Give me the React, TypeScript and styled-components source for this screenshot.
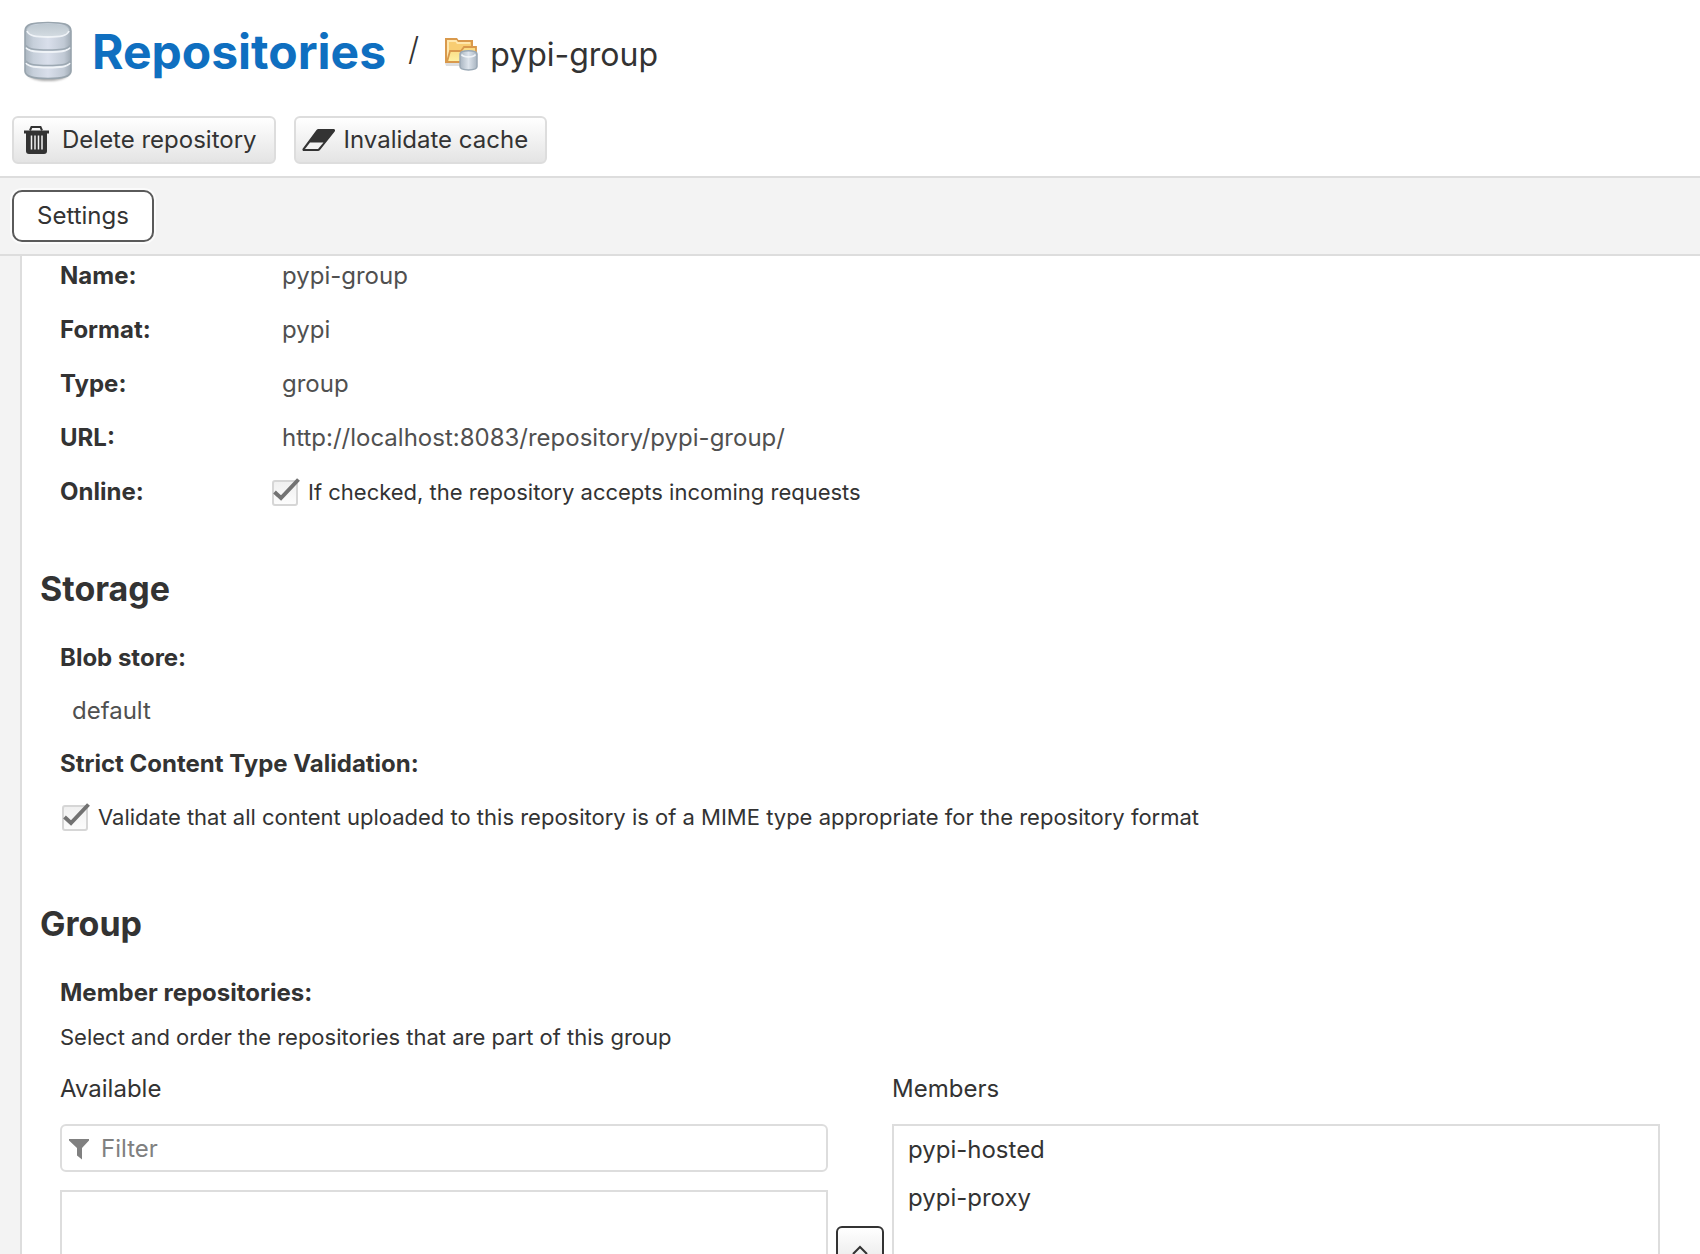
import React, { useState } from "react";
import styled, { createGlobalStyle } from "styled-components";

const color = {
  text: "#333333",
  value: "#505050",
  line: "#dddddd",
  strip: "#f3f3f3",
  link: "#0f6fc0",
  hint: "#808080",
};

const GlobalStyle = createGlobalStyle`
  *, *::before, *::after { box-sizing: border-box; }
  body {
    margin: 0;
    background: #ffffff;
    color: ${color.text};
    font-family: Inter, "Liberation Sans", sans-serif;
    font-size: 24px;
    line-height: 30px;
  }
  button, input { font: inherit; color: inherit; }
`;

const Page = styled.div`
  display: flex;
  flex-direction: column;
  height: 100vh;
  overflow: hidden;
`;

const Header = styled.header`
  display: flex;
  align-items: center;
  height: 104px;
  padding: 0 24px;
`;

const Title = styled.h1`
  margin: 0 22px 0 20px;
  font-size: 48px;
  line-height: 60px;
  font-weight: 700;
`;

const TitleLink = styled.a`
  color: ${color.link};
  text-decoration: none;
`;

const Separator = styled.span`
  padding-bottom: 6px;
  margin-right: 26px;
  font-size: 32px;
  line-height: 40px;
  font-weight: 300;
`;

const Current = styled.span`
  display: flex;
  align-items: center;
  gap: 12px;
  padding-top: 6px;
  font-size: 32px;
  line-height: 40px;
`;

const Toolbar = styled.div`
  display: flex;
  gap: 18px;
  padding: 12px;
  border-bottom: 2px solid ${color.line};
`;

const ToolButton = styled.button`
  display: flex;
  align-items: center;
  gap: 8px;
  height: 48px;
  padding: 0 17px 0 6px;
  border: 2px solid ${color.line};
  border-radius: 6px;
  background: linear-gradient(#ffffff, #e4e4e4);
`;

const TabStrip = styled.nav`
  display: flex;
  padding: 12px;
  background: ${color.strip};
  border-bottom: 2px solid ${color.line};
`;

const Tab = styled.button`
  height: 52px;
  padding: 0 23px;
  border: 2px solid #5a5a5a;
  border-radius: 10px;
  background: #ffffff;
  box-shadow: 0 0 0 2px #fbfbfb;
`;

const Body = styled.main`
  flex: 1;
  min-height: 0;
  display: flex;
  padding-left: 20px;
  background: ${color.strip};
`;

const Panel = styled.form`
  flex: 1;
  overflow-y: auto;
  scrollbar-width: none;
  padding: 5px 40px 40px 18px;
  border-left: 2px solid ${color.line};
  background: #ffffff;
`;

const Section = styled.section`
  padding-left: 20px;
`;

const SectionTitle = styled.h2<{ $space: number }>`
  margin: ${(p) => p.$space}px 0 34px;
  font-size: 34px;
  line-height: 40px;
  font-weight: 700;
`;

const Facts = styled.dl`
  display: grid;
  grid-template-columns: 222px 1fr;
  row-gap: 24px;
  margin: 0;
`;

const Term = styled.dt`
  font-weight: 700;
`;

const Value = styled.dd`
  margin: 0;
  color: ${color.value};
`;

const CheckValue = styled.dd`
  margin: 0 0 0 -12px;
`;

const Stack = styled.div`
  display: flex;
  flex-direction: column;
  gap: 23px;
`;

const FieldLabel = styled.div`
  font-weight: 700;
`;

const Indented = styled.div`
  padding-left: 12px;
  color: ${color.value};
`;

const Help = styled.p`
  margin: 14px 0 22px;
  font-size: 22px;
`;

const CheckLabel = styled.label`
  display: flex;
  align-items: center;
  gap: 8px;
  font-size: 22px;
`;

const CheckBox = styled.span`
  display: grid;
  width: 30px;
  height: 28px;
  padding-left: 2px;

  > * { grid-area: 1 / 1; }
`;

const CheckInput = styled.input`
  appearance: none;
  align-self: end;
  width: 26px;
  height: 26px;
  margin: 0;
  border: 2px solid #d6d6d6;
  border-radius: 3px;
  background: linear-gradient(#f0f0f0, #fcfcfc);

  &:not(:checked) + svg { visibility: hidden; }
`;

const CheckMark = styled.svg`
  width: 28px;
  height: 28px;
  pointer-events: none;
`;

const Picker = styled.div`
  display: grid;
  grid-template-columns: minmax(0, 1fr) 48px minmax(0, 1fr);
  column-gap: 8px;
`;

const Column = styled.div`
  display: flex;
  flex-direction: column;
`;

const ColumnTitle = styled.div`
  margin-bottom: 20px;
`;

const FilterBox = styled.label`
  display: flex;
  align-items: center;
  gap: 12px;
  height: 48px;
  margin-bottom: 18px;
  padding: 2px 7px 0;
  border: 2px solid ${color.line};
  border-radius: 6px;
`;

const FilterInput = styled.input`
  flex: 1;
  min-width: 0;
  padding: 0;
  border: 0;
  outline: 0;
  background: transparent;

  &::placeholder { color: ${color.hint}; opacity: 1; }
`;

const List = styled.ul`
  flex: 1;
  min-height: 320px;
  margin: 0;
  padding: 0;
  border: 2px solid ${color.line};
  list-style: none;
`;

const Item = styled.li`
  padding: 9px 14px;
`;

const Movers = styled.div`
  display: flex;
  flex-direction: column;
  gap: 8px;
  padding-top: 152px;
`;

const MoveButton = styled.button`
  display: flex;
  align-items: center;
  justify-content: center;
  width: 48px;
  height: 48px;
  padding: 0;
  border: 2px solid ${color.text};
  border-radius: 6px;
  background: linear-gradient(#ffffff, #e4e4e4);
`;

function DatabaseIcon() {
  return (
    <svg width="48" height="62" viewBox="0 0 48 62" aria-hidden="true">
      <defs>
        <linearGradient id="dbBody">
          <stop offset="0" stopColor="#aab5bf" />
          <stop offset="0.18" stopColor="#c6cfda" />
          <stop offset="0.5" stopColor="#d9dfeb" />
          <stop offset="0.85" stopColor="#c0c9d4" />
          <stop offset="1" stopColor="#9faab4" />
        </linearGradient>
        <linearGradient id="dbTop" x2="0" y2="1">
          <stop offset="0" stopColor="#bcc7cf" />
          <stop offset="1" stopColor="#d3dbe1" />
        </linearGradient>
        <filter id="dbShade" x="-20%" y="-20%" width="140%" height="140%">
          <feGaussianBlur stdDeviation="1.2" />
        </filter>
      </defs>
      <path d="M1 48c2 10 11 12 23 12s21-2 23-12z" fill="#777" opacity="0.6" filter="url(#dbShade)" />
      <path d="M1 10C1 3 9 1.500 24 1.500S47 3 47 10v40c0 6-9 7.500-23 7.500S1 56 1 50z" fill="url(#dbBody)" stroke="#98a4ad" strokeWidth="1.600" />
      <ellipse cx="24" cy="9" rx="21" ry="6.500" fill="url(#dbTop)" />
      <path d="M3 10c2 5 9 6 21 6s19-1 21-6M2 26.500c3 4 10 4.500 22 4.500s19-.5 22-4.500M2 42c3 4 10 4.500 22 4.500s19-.5 22-4.500" fill="none" stroke="#eff3f7" strokeWidth="1.800" />
      <path d="M2 24.500c3 4 10 4.500 22 4.500s19-.5 22-4.500M2 40c3 4 10 4.500 22 4.500s19-.5 22-4.500" fill="none" stroke="#9ca8b2" strokeWidth="1.600" />
    </svg>
  );
}

function GroupIcon() {
  return (
    <svg width="33" height="34" viewBox="0 0 33 34" aria-hidden="true">
      <defs>
        <linearGradient id="folder" x2="0" y2="1">
          <stop offset="0" stopColor="#f9d77d" />
          <stop offset="1" stopColor="#fff3a6" />
        </linearGradient>
        <linearGradient id="miniDb">
          <stop offset="0" stopColor="#a9b5c1" />
          <stop offset="0.5" stopColor="#dde4ec" />
          <stop offset="1" stopColor="#a9b5c1" />
        </linearGradient>
      </defs>
      <path d="M0 25h16v3H1z" fill="#dedede" />
      <path d="M1 24V1h10.500l1.500 2h14v21z" fill="#f8cd72" stroke="#d9994c" strokeWidth="2" />
      <path d="M3 22V3h8l1.500 2H25" fill="none" stroke="#ffe7ac" strokeWidth="2" />
      <path d="M2 24l3-11h11l3-4h12v15z" fill="url(#folder)" stroke="#d9994c" strokeWidth="1.800" />
      <path d="M15 16c0-4.500 17-4.500 17 0v12.500c0 4.500-17 4.500-17 0z" fill="url(#miniDb)" stroke="#9aa8b5" strokeWidth="1.500" />
      <path d="M16.500 16.500c2 3.200 12 3.200 14 0" fill="none" stroke="#f0f4f8" strokeWidth="1.600" />
    </svg>
  );
}

function TrashIcon() {
  return (
    <svg width="34" height="28" viewBox="0 0 34 28" aria-hidden="true">
      <path d="M10 4.500l1.500-3.500h9L22 4.500" fill="none" stroke="#333" strokeWidth="2" />
      <path d="M4 4.500h25v3H4z" fill="#333" />
      <path d="M6 7h21v18a3 3 0 0 1-3 3H9a3 3 0 0 1-3-3z" fill="#333" />
      <path d="M11.500 9.500v14M15 9.500v14M18.500 9.500v14M22 9.500v14" stroke="#f1f1f1" strokeWidth="1.500" />
    </svg>
  );
}

function EraserIcon() {
  return (
    <svg width="34" height="24" viewBox="0 0 34 24" aria-hidden="true">
      <path d="M16.500 1H31.500a1.500 1.500 0 0 1 1.200 2.500L18 22a3 3 0 0 1-2 1H2a1.500 1.500 0 0 1-1.200-2.500L14.500 2a3 3 0 0 1 2-1z" fill="#333" />
      <path d="M8 14.500h13.500L16 21H3z" fill="#f1f1f1" />
    </svg>
  );
}

function FilterIcon() {
  return (
    <svg width="20" height="22" viewBox="0 0 20 22" aria-hidden="true">
      <path d="M0 1h20v1.500l-7 7.500v11.500L8 17.500V10L0 2.500z" fill={color.hint} />
    </svg>
  );
}

function Chevron({ down }: { down?: boolean }) {
  return (
    <svg width="16" height="10" viewBox="0 0 16 10" aria-hidden="true">
      <path d={down ? "M1 1l7 7 7-7" : "M1 9l7-7 7 7"} fill="none" stroke={color.text} strokeWidth="2" />
    </svg>
  );
}

function CheckField({ id, text }: { id: string; text: string }) {
  const [on, setOn] = useState(true);
  return (
    <CheckLabel htmlFor={id}>
      <CheckBox>
        <CheckInput id={id} type="checkbox" checked={on} onChange={() => setOn(!on)} />
        <CheckMark viewBox="0 0 28 28" aria-hidden="true">
          <path d="M2.500 14l6.500 6L26.500 1.500" fill="none" stroke="#727272" strokeWidth="4" />
        </CheckMark>
      </CheckBox>
      {text}
    </CheckLabel>
  );
}

const facts = [
  ["Name:", "pypi-group"],
  ["Format:", "pypi"],
  ["Type:", "group"],
  ["URL:", "http://localhost:8083/repository/pypi-group/"],
];

const members = ["pypi-hosted", "pypi-proxy"];

export default function App() {
  return (
    <>
      <GlobalStyle />
      <Page>
        <Header>
          <DatabaseIcon />
          <Title>
            <TitleLink href="#repositories">Repositories</TitleLink>
          </Title>
          <Separator>/</Separator>
          <Current>
            <GroupIcon />
            pypi-group
          </Current>
        </Header>
        <Toolbar>
          <ToolButton type="button">
            <TrashIcon />
            Delete repository
          </ToolButton>
          <ToolButton type="button">
            <EraserIcon />
            Invalidate cache
          </ToolButton>
        </Toolbar>
        <TabStrip>
          <Tab type="button">Settings</Tab>
        </TabStrip>
        <Body>
          <Panel>
            <Section>
              <Facts>
                {facts.map(([term, value]) => (
                  <React.Fragment key={term}>
                    <Term>{term}</Term>
                    <Value>{value}</Value>
                  </React.Fragment>
                ))}
                <Term>Online:</Term>
                <CheckValue>
                  <CheckField id="online" text="If checked, the repository accepts incoming requests" />
                </CheckValue>
              </Facts>
            </Section>

            <SectionTitle $space={62}>Storage</SectionTitle>
            <Section>
              <Stack>
                <FieldLabel>Blob store:</FieldLabel>
                <Indented>default</Indented>
                <FieldLabel>Strict Content Type Validation:</FieldLabel>
                <CheckField
                  id="strict"
                  text="Validate that all content uploaded to this repository is of a MIME type appropriate for the repository format"
                />
              </Stack>
            </Section>

            <SectionTitle $space={72}>Group</SectionTitle>
            <Section>
              <FieldLabel>Member repositories:</FieldLabel>
              <Help>Select and order the repositories that are part of this group</Help>
              <Picker>
                <Column>
                  <ColumnTitle>Available</ColumnTitle>
                  <FilterBox>
                    <FilterIcon />
                    <FilterInput type="text" placeholder="Filter" aria-label="Filter" />
                  </FilterBox>
                  <List aria-label="Available" />
                </Column>
                <Movers>
                  <MoveButton type="button" aria-label="Move up">
                    <Chevron />
                  </MoveButton>
                  <MoveButton type="button" aria-label="Move down">
                    <Chevron down />
                  </MoveButton>
                </Movers>
                <Column>
                  <ColumnTitle>Members</ColumnTitle>
                  <List aria-label="Members">
                    {members.map((name) => (
                      <Item key={name}>{name}</Item>
                    ))}
                  </List>
                </Column>
              </Picker>
            </Section>
          </Panel>
        </Body>
      </Page>
    </>
  );
}
